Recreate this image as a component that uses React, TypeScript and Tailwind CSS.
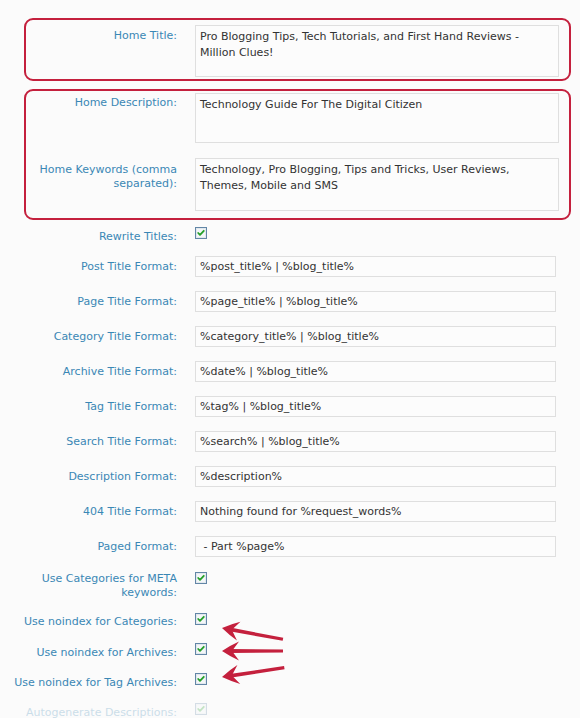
import React from 'react';

const font = "font-['DejaVu_Sans','Verdana',sans-serif]";
const labelCls = 'text-right text-[11px] leading-[14px] text-[#3a87b5]';
const fieldCls =
  'border border-[#dfdfdf] bg-[#fcfcfc] text-[11px] leading-[16px] text-[#333] pl-[4px] pr-[6px]';

function Check() {
  return (
    <svg width="12" height="12" viewBox="0 0 12 12" className="block shrink-0">
      <rect x="0.5" y="0.5" width="11" height="11" fill="#f3f6f8" stroke="#6286a6" />
      <rect x="1.5" y="1.5" width="9" height="9" fill="none" stroke="#e2e8ee" />
      <path d="M3.2 6 L5 7.9 L8.8 3.8" fill="none" stroke="#25a02a" strokeWidth="1.8" strokeLinecap="round" strokeLinejoin="round" />
    </svg>
  );
}

function InputRow({ label, value }: { label: string; value: string }) {
  return (
    <div className="flex items-center mt-[14px] first:mt-[12px]">
      <div className={`w-[177px] ${labelCls}`}>{label}</div>
      <div className={`ml-[18px] w-[361px] h-[21px] flex items-center ${fieldCls}`}>{value}</div>
    </div>
  );
}

function CheckRow({ label, pt, mt, faded }: { label: React.ReactNode; pt: string; mt: string; faded?: boolean }) {
  return (
    <div className={`flex items-start ${mt} ${faded ? 'opacity-25' : ''}`}>
      <div className={`w-[177px] ${pt} ${labelCls}`}>{label}</div>
      <div className="ml-[18px]">
        <Check />
      </div>
    </div>
  );
}

function Arrow({ tipX, tipY, angle, len }: { tipX: number; tipY: number; angle: number; len: number }) {
  return (
    <g transform={`rotate(${angle} ${tipX} ${tipY})`} fill="#c4203d">
      <path d={`M${tipX + 8} ${tipY - 1.9} L${tipX + len} ${tipY - 1.6} L${tipX + len} ${tipY + 1.6} L${tipX + 8} ${tipY + 1.9} Z`} />
      <path
        d={`M${tipX} ${tipY} Q${tipX + 9} ${tipY - 6} ${tipX + 17} ${tipY - 9.5} L${tipX + 10} ${tipY} L${tipX + 17} ${tipY + 9.5} Q${tipX + 9} ${tipY + 6} ${tipX} ${tipY} Z`}
      />
    </g>
  );
}

export default function App() {
  const formats = [
    ['Post Title Format:', '%post_title% | %blog_title%'],
    ['Page Title Format:', '%page_title% | %blog_title%'],
    ['Category Title Format:', '%category_title% | %blog_title%'],
    ['Archive Title Format:', '%date% | %blog_title%'],
    ['Tag Title Format:', '%tag% | %blog_title%'],
    ['Search Title Format:', '%search% | %blog_title%'],
    ['Description Format:', '%description%'],
    ['404 Title Format:', 'Nothing found for %request_words%'],
    ['Paged Format:', ' - Part %page%'],
  ];

  return (
    <div className={`relative w-[580px] h-[718px] overflow-hidden bg-[#fbfbfb] pt-[18px] ${font} whitespace-pre`}>
      {/* Home title */}
      <div className="ml-[24px] w-[547px] border-2 border-[#c4203d] rounded-[9px] pt-[5px] pb-[2px] flex">
        <div className={`w-[151px] pt-[4px] ${labelCls}`}>Home Title:</div>
        <div className={`ml-[18px] w-[364px] h-[52px] pt-[3px] whitespace-normal ${fieldCls}`}>
          Pro Blogging Tips, Tech Tutorials, and First Hand Reviews - Million Clues!
        </div>
      </div>

      {/* Description + keywords */}
      <div className="ml-[24px] mt-[8px] w-[547px] border-2 border-[#c4203d] rounded-[9px] pt-[2px] pb-[7px]">
        <div className="flex">
          <div className={`w-[151px] pt-[3px] ${labelCls}`}>Home Description:</div>
          <div className={`ml-[18px] w-[364px] h-[50px] pt-[3px] ${fieldCls}`}>Technology Guide For The Digital Citizen</div>
        </div>
        <div className="flex mt-[15px]">
          <div className={`w-[151px] pt-[5px] whitespace-normal ${labelCls}`}>
            Home Keywords (comma separated):
          </div>
          <div className={`ml-[18px] w-[364px] h-[53px] pt-[3px] whitespace-normal ${fieldCls}`}>
            Technology, Pro Blogging, Tips and Tricks, User Reviews, Themes, Mobile and SMS
          </div>
        </div>
      </div>

      <CheckRow label="Rewrite Titles:" pt="pt-[3px]" mt="mt-[7px]" />

      <div>
        {formats.map(([l, v]) => (
          <InputRow key={l} label={l} value={v} />
        ))}
      </div>

      <CheckRow
        label={
          <>
            {'Use Categories for META'}
            <br />
            {'keywords:'}
          </>
        }
        pt="pt-0"
        mt="mt-[15px]"
      />
      <CheckRow label="Use noindex for Categories:" pt="pt-[2px]" mt="mt-[13px]" />
      <CheckRow label="Use noindex for Archives:" pt="pt-[3px]" mt="mt-[14px]" />
      <CheckRow label="Use noindex for Tag Archives:" pt="pt-[3px]" mt="mt-[13px]" />
      <CheckRow label="Autogenerate Descriptions:" pt="pt-[3px]" mt="mt-[13px]" faded />

      {/* annotation arrows */}
      <svg className="absolute left-[215px] top-[612px]" width="80" height="76" viewBox="215 612 80 76">
        <Arrow tipX={222} tipY={628} angle={10.5} len={62} />
        <Arrow tipX={222} tipY={651} angle={0} len={61} />
        <Arrow tipX={222} tipY={677} angle={-8.5} len={63} />
      </svg>
    </div>
  );
}
